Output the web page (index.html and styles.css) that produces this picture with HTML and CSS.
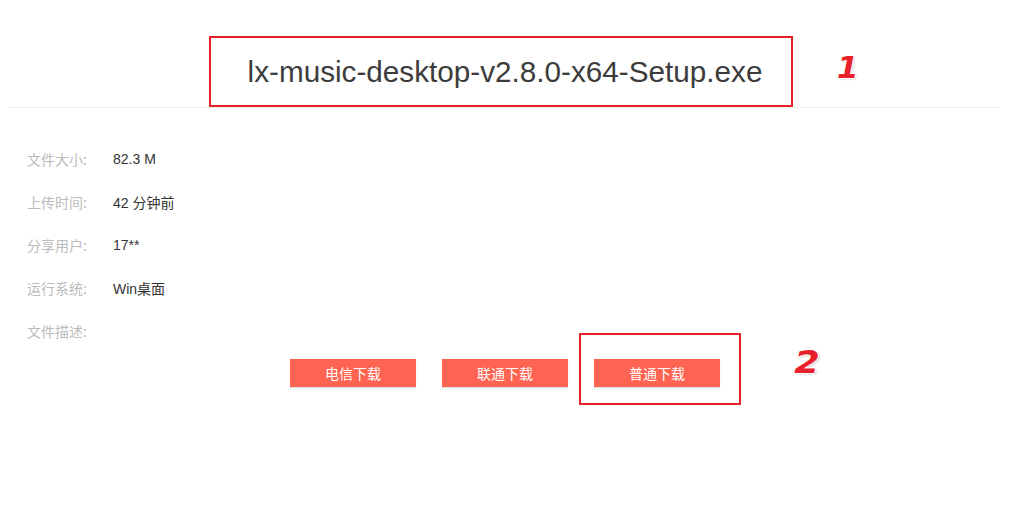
FILE: index.html
```html
<!DOCTYPE html>
<html lang="zh-CN">
<head>
<meta charset="utf-8">
<title>lx-music-desktop-v2.8.0-x64-Setup.exe</title>
<link rel="stylesheet" href="styles.css">
</head>
<body>
<div class="page">
  <div class="header">
    <div class="title-box">
      <h1 class="title">lx-music-desktop-v2.8.0-x64-Setup.exe</h1>
    </div>
    <span class="mark mark-1">1</span>
  </div>
  <div class="info">
    <div class="row"><span class="label">文件大小:</span><span class="value">82.3 M</span></div>
    <div class="row"><span class="label">上传时间:</span><span class="value">42 分钟前</span></div>
    <div class="row"><span class="label">分享用户:</span><span class="value">17**</span></div>
    <div class="row"><span class="label">运行系统:</span><span class="value">Win桌面</span></div>
    <div class="row"><span class="label">文件描述:</span><span class="value"></span></div>
  </div>
  <div class="buttons">
    <a class="btn">电信下载</a>
    <a class="btn">联通下载</a>
    <a class="btn">普通下载</a>
    <span class="highlight"></span>
    <span class="mark mark-2">2</span>
  </div>
</div>
</body>
</html>
```
FILE: styles.css
```css
html, body {
  margin: 0;
  padding: 0;
  background: #fff;
}
body {
  font-family: "Liberation Sans", Arial, "Noto Sans CJK SC", sans-serif;
  color: #333;
}
.page {
  width: 990px;
  margin-left: 10px;
  min-height: 514px;
}
.header {
  position: relative;
  display: flex;
  justify-content: center;
  padding-top: 36px;
  padding-right: 8px;
  border-bottom: 1px solid #eeeeee;
}
.title-box {
  width: 584px;
  height: 71px;
  box-sizing: border-box;
  border: 2px solid #e8202a;
  display: flex;
  align-items: center;
  justify-content: center;
  padding-left: 8px;
  padding-top: 1px;
}
.title {
  margin: 0;
  font-weight: normal;
  font-size: 29.7px;
  color: #3c3c3c;
  white-space: nowrap;
}
.mark {
  position: absolute;
  font-family: "DejaVu Sans", sans-serif;
  font-weight: bold;
  font-style: italic;
  color: #e8202a;
  text-shadow: 1px 0 0 #fff, -1px 0 0 #fff, 0 1px 0 #fff, 0 -1px 0 #fff, 1px 1px 2px #aaa;
  line-height: 1;
}
.mark-1 {
  left: 827px;
  top: 52px;
  font-size: 31px;
}
.info {
  padding-top: 29px;
  padding-left: 17px;
}
.row {
  display: flex;
  height: 43px;
  align-items: center;
  font-size: 14px;
}
.label {
  width: 86px;
  color: #bbbbbb;
  font-family: "Noto Sans CJK SC", sans-serif;
  font-size: 14px;
}
.value {
  color: #333;
}
.buttons {
  position: relative;
  display: flex;
  justify-content: center;
  gap: 26px;
  padding-top: 7px;
}
.btn {
  display: flex;
  align-items: center;
  justify-content: center;
  width: 126px;
  height: 28px;
  background: #ff6352;
  color: #fff;
  font-family: "Noto Sans CJK SC", sans-serif;
  font-size: 14px;
  box-shadow: 0 1px 1px rgba(0,0,0,0.12);
}
.highlight {
  position: absolute;
  left: 569px;
  top: -19px;
  width: 162px;
  height: 72px;
  box-sizing: border-box;
  border: 2px solid #e8202a;
}
.mark-2 {
  left: 786px;
  top: -6px;
  font-size: 32px;
  transform: scaleX(1.15);
}
```
